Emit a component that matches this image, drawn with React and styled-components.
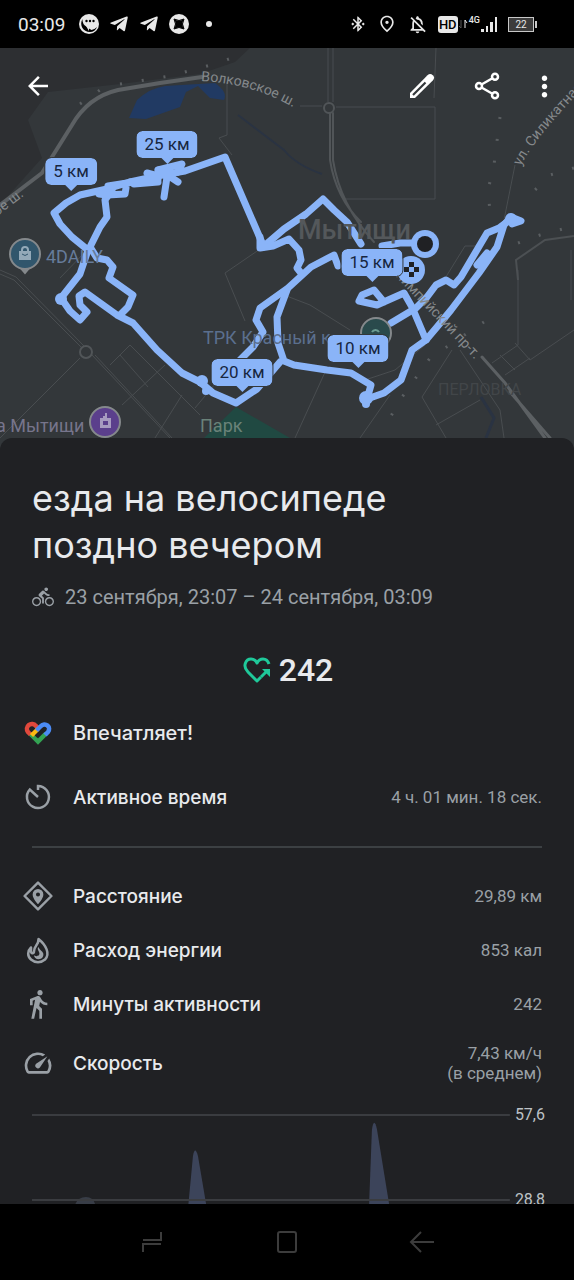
import React from 'react';
import styled, { createGlobalStyle } from 'styled-components';
import {
  MdArrowBack,
  MdBluetoothConnected,
  MdDirectionsBike,
  MdDirectionsWalk,
  MdMoreVert,
  MdOutlineNotificationsOff,
  MdOutlinePlace,
  MdSpeed,
} from 'react-icons/md';
import { FaTelegramPlane } from 'react-icons/fa';

const MAP = { top: 48, width: 574, height: 402 };

const kmMarks = [
  { label: '5 км', x: 71, y: 191 },
  { label: '25 км', x: 167, y: 164 },
  { label: '15 км', x: 372, y: 282 },
  { label: '20 км', x: 242, y: 392 },
  { label: '10 км', x: 358, y: 368 },
];

const route = [
  'M263 245 L225 157 L185 171 L167 174 L130 182 L107 189 L80 195 L66 203 L54 213 L60 224 L72 237 L88 250 L80 274 L61 298 L70 311 L80 320 L87 312 L80 305 L79 296 L85 292 L117 315 L133 323 L157 350 L182 373 L200 382 L213 393 L236 403 L257 389 L280 362',
  'M112 190 L105 200 L107 217 L100 227 L95 237 L90 247 L97 258 L107 260 L113 267 L109 278 L133 295 L128 307 L121 314',
  'M99 194 L107 195 L125 194 L126 188 M108 186 L140 181 M130 182 L158 180 L158 176 L147 173 M158 170 L182 164 L178 172 M158 170 L167 177 L164 197 M166 174 L178 182 M134 184 L158 182',
  'M263 247 L284 229 L306 214 L323 199 L334 210 L347 222 L354 233 L361 244 M382 246 L400 243 L412 243',
  'M260 237 L260 248 L273 246 L289 239 L299 250 L301 260 L297 268 L301 273',
  'M338 266 L334 255 L311 267 L288 288 L260 308 L256 320 L263 332 L253 347 L240 360',
  'M287 290 L277 317 L278 343 L284 361 L294 365 L327 370 L351 373 L371 385 L367 399 L384 393 L401 380 L412 350 L426 340 L437 327 L451 310 L479 273 L497 247 L504 225 L511 217 L521 221 L512 224',
  'M511 219 L499 228 L487 233 L461 277 L454 285 L446 280 L436 285 L427 297 L416 308 L391 323',
  'M477 265 L487 253',
  'M384 302 L374 290 L362 295 L359 301 L377 305 L404 293 L412 307 L426 340',
];

const stats = [
  { name: 'Расстояние', value: '29,89 км', icon: DistanceIcon },
  { name: 'Расход энергии', value: '853 кал', icon: FlameIcon },
  { name: 'Минуты активности', value: '242', icon: MdDirectionsWalk },
];

function ChatIcon() {
  return (
    <svg width="20" height="20" viewBox="0 0 20 20">
      <circle cx="10" cy="10" r="10" fill="#e8e8e8" />
      <path d="M3.500 5C0 11 4 18 11 18q5 0 7-5q-3 3-5.500 3Q6 12 4.500 10Q3 7 3.500 5z" fill="#000" />
      <path d="M7 12l3 1v4z" fill="#e8e8e8" />
      <g fill="#000">
        <circle cx="7.500" cy="7" r="1.200" />
        <circle cx="11" cy="7" r="1.200" />
        <circle cx="14.500" cy="7" r="1.200" />
      </g>
    </svg>
  );
}

function StarIcon() {
  return (
    <svg width="20" height="20" viewBox="0 0 20 20">
      <circle cx="10" cy="10" r="10" fill="#e8e8e8" />
      <path d="M5 5q5 3 10 0q-3 5 0 10q-5-3-10 0q3-5 0-10z" fill="#000" stroke="#000" strokeLinejoin="round" />
    </svg>
  );
}

function SignalIcon() {
  return (
    <svg width="17" height="16" viewBox="0 0 17 16" fill="#e8e8e8">
      <rect x="0" y="13" width="3" height="3" />
      <rect x="5" y="10" width="2" height="6" />
      <rect x="9" y="6" width="3" height="10" />
      <rect x="14" y="1" width="2" height="15" />
    </svg>
  );
}

function TrafficIcon() {
  return (
    <svg width="9" height="10" viewBox="0 0 9 10" fill="none">
      <path d="M2 1v8M0 7l2 2" stroke="#555" />
      <path d="M6 9V1l2 3" stroke="#e8e8e8" />
    </svg>
  );
}

function PencilIcon() {
  return (
    <svg width="26" height="26" viewBox="0 0 26 26">
      <path d="M1 25V20L18.500 2.200a3.500 3.500 0 0 1 5.300 5.300L6 25z" fill="#fff" />
      <path d="M4 22L16.500 9.500" stroke="#33373a" strokeWidth="2.200" />
    </svg>
  );
}

function ShareIcon() {
  return (
    <svg width="26" height="28" viewBox="0 0 26 28" fill="none" stroke="#fff" strokeWidth="2.500">
      <path d="M7.500 12.500L18 6.500M7.500 15.500L18 21.500" />
      <circle cx="5" cy="14" r="3" />
      <circle cx="21" cy="4.700" r="3" />
      <circle cx="21" cy="23.300" r="3" />
    </svg>
  );
}

function HeartPointsIcon() {
  return (
    <svg width="28" height="26" viewBox="0 0 28 26" fill="none" stroke="#1fc99a" strokeWidth="3">
      <path d="M18 20l-4 4L5 15C-1 9 3 2 8 2c3 0 5 2 6 4c1-2 3-4 6-4c3 0 5 2 6 5" strokeLinejoin="round" />
      <path d="M18 20l6-6" />
      <path d="M19 12h8v8z" fill="#1fc99a" stroke="none" />
    </svg>
  );
}

function FitIcon() {
  return (
    <svg width="28" height="24" viewBox="0 0 28 24" fill="none" strokeWidth="4.500">
      <path d="M6 12.500L14 20.500L22 12.500" stroke="#33a353" />
      <path d="M14 7L11.800 4.800A4.700 4.700 0 0 0 4 11L6.500 13.500" stroke="#e0483c" />
      <path d="M7.500 14.500L14 8" stroke="#f9bb12" />
      <path d="M12.500 9.500L17 5A4.600 4.600 0 0 1 24 11L21 14" stroke="#4b8bf5" />
      <path d="M12 15.500L19 8.500" stroke="#202124" strokeWidth="3" />
    </svg>
  );
}

function TimeIcon() {
  return (
    <svg width="28" height="28" viewBox="0 0 28 28" fill="none" stroke="#9aa0a6" strokeWidth="2.500">
      <path d="M14 7V3a11 11 0 1 1-8.200 3.600L14 14" />
    </svg>
  );
}

function DistanceIcon() {
  return (
    <svg width="30" height="30" viewBox="0 0 28 28">
      <path d="M14 1.500L26.500 14L14 26.500L1.500 14z" fill="none" stroke="#9aa0a6" strokeWidth="2.300" strokeLinejoin="round" />
      <path d="M14 7.500a5 5 0 0 0-5 5c0 4 5 9 5 9s5-5 5-9a5 5 0 0 0-5-5zm0 3.200a1.900 1.900 0 1 1 0 3.800a1.900 1.900 0 0 1 0-3.800z" fill="#9aa0a6" />
    </svg>
  );
}

function FlameIcon() {
  return (
    <svg width="28" height="28" viewBox="0 0 28 28" fill="none" stroke="#9aa0a6" strokeWidth="2.500">
      <path d="M14.500 3C15 9 9.500 10.500 10 15.500C10 18 7 18 7 15V11.500C3.500 15 3 20 7 23.500C11 27 17 27 21 23.500C26.500 18 22 9 14.500 3z" strokeLinejoin="round" />
      <path d="M14.500 11c-2.500 3 2.500 5 .5 8c-1.500 2-4.500 1-5 0c0 2.500 2 4.200 4.500 4.200c3.500 0 5.500-2.800 4.700-6c-.7-2.200-3.700-3.200-4.700-6.200z" fill="#9aa0a6" stroke="none" />
    </svg>
  );
}

function CityMap() {
  return (
    <MapSvg viewBox={`0 ${MAP.top} ${MAP.width} ${MAP.height}`} aria-hidden="true">
      <rect y="48" width="574" height="402" fill="#33373a" />
      <path d="M0 48H250L235 62L200 74L120 84L48 92L28 120L42 158L0 205z" fill="#2d2f32" />
      <path d="M129 118L137 100Q150 88 165 86L215 83Q228 92 224 100L210 98L198 86L186 92L180 107L146 119z" fill="#213a63" />
      <path d="M238 115L284 150Q296 165 322 174" fill="none" stroke="#2a3342" strokeWidth="2" />
      <path d="M481 397L494 418L486 438" fill="none" stroke="#2a3342" strokeWidth="3" />
      <path d="M236 407L290 438H204z" fill="#204942" />

      <g fill="none" stroke="#494d50" strokeWidth="1">
        <path d="M328 48V102M333 48V102M336 107H435V199H343M300 106H322M227 82V135L219 138L232 155M87 250L60 278M436 48L434 98M263 247L225 273L245 321" />
        <path d="M0 274L14 280L82 348M0 270L16 277L84 346M92 355L170 438M95 355L172 438M80 358L0 438M110 365L130 345L200 415M120 355L148 387M122 405L165 365M155 438L182 395M195 408L220 378" />
        <path d="M284 295L310 305L350 330M326 370L295 438M365 380L395 370L425 345M515 165L504 220M444 280L465 246H480M518 270V345L492 363M515 343L530 360L574 330M530 358L505 375M500 355L515 370M452 350L422 397L446 438M436 425L480 400M460 350L500 410L504 438M390 395L360 438M571 250V300" />
      </g>
      <path d="M574 236L545 240L516 260L518 280" fill="none" stroke="#4c5053" strokeWidth="2" />
      <g fill="none" stroke="#5c6063" strokeLinecap="round">
        <path d="M0 205L42 173L72 125Q88 97 118 90L160 83L202 77" strokeWidth="4" />
        <path d="M330 113V160Q336 198 361 222M333 113V160Q340 205 374 242" strokeWidth="2" stroke="#515558" />
        <path d="M482 357L505 383L545 438M510 392L550 438" strokeWidth="3" />
      </g>
      <g fill="#33373a" stroke="#515558" strokeWidth="2">
        <circle cx="329" cy="108" r="5" />
        <circle cx="86" cy="352" r="6" />
      </g>
      <path
        d="M80 104L100 90M120 84L170 76L218 63L240 55M500 117L494 165L488 190L490 212M574 168L550 175L530 195M518 243L540 235L574 226M484 322L430 358L400 400L386 425"
        fill="none"
        stroke="#5a5e61"
        strokeWidth="3"
        strokeDasharray="2 20"
      />

      <path id="volk" d="M201 81Q256 84 298 110" fill="none" />
      <path id="silikat" d="M521 166Q534 138 592 79" fill="none" />
      <path id="olymp" d="M395 276L480 365" fill="none" />
      <path id="volk2" d="M-21 230L42 182" fill="none" />

      <g fill="none" stroke="#8ab4f8" strokeWidth="7" strokeLinecap="round" strokeLinejoin="round">
        {route.map((d) => (
          <path key={d} d={d} />
        ))}
      </g>
      <g fill="#8ab4f8">
        <circle cx="61" cy="299" r="6" />
        <circle cx="202" cy="381" r="6" />
        <circle cx="206" cy="391" r="4" />
        <circle cx="366" cy="398" r="7" />
        <circle cx="366" cy="404" r="4" />
        <circle cx="511" cy="219" r="6" />
      </g>

      <StreetText>
        <textPath href="#volk">Волковское ш.</textPath>
      </StreetText>
      <StreetText>
        <textPath href="#silikat">ул. Силикатная</textPath>
      </StreetText>
      <StreetText>
        <textPath href="#olymp">лимпийский пр-т.</textPath>
      </StreetText>
      <StreetText>
        <textPath href="#volk2">вское ш.</textPath>
      </StreetText>
      <CityText x="298" y="239">Мытищи</CityText>
      <DistrictText x="438" y="395">ПЕРЛОВКА</DistrictText>
      <PlaceText x="46" y="263" $color="#667c9b">4DAILY</PlaceText>
      <PlaceText x="203" y="344" $color="#5b6f8e">ТРК Красный к</PlaceText>
      <PlaceText x="-4" y="432" $color="#77758c">а Мытищи</PlaceText>
      <PlaceText x="200" y="432" $color="#6a8279">Парк</PlaceText>

      <g strokeWidth="2" stroke="#85898c">
        <path d="M20 267L25 273L30 267z" fill="#85898c" />
        <circle cx="25" cy="254" r="15" fill="#31566c" />
        <circle cx="105" cy="422" r="15" fill="#5b3f8c" />
        <circle cx="376" cy="333" r="15" fill="#2a4a4c" />
      </g>
      <path d="M22 252v-2q0-3 3-3t3 3v2" fill="none" stroke="#93a9b8" strokeWidth="2" />
      <path d="M19 251h12v9H19z" fill="#93a9b8" />
      <path d="M22 254q3 3 6 0" fill="none" stroke="#31566c" />
      <path d="M100 428v-10h3v-2h2v-3h2v5h4v10zM103 421v4h5v-4z" fill="#a79bc0" fillRule="evenodd" />
      <path d="M372 332a4 4 0 0 1 7 0" fill="none" stroke="#6c9c92" strokeWidth="2" />

      <circle cx="425" cy="244" r="14" fill="#8ab4f8" />
      <circle cx="425" cy="244" r="8" fill="#202124" />
      <circle cx="411" cy="270" r="14" fill="#8ab4f8" />
      <g fill="#202124">
        <rect x="409" y="262" width="5" height="5" />
        <rect x="404" y="267" width="5" height="5" />
        <rect x="414" y="267" width="5" height="5" />
        <rect x="409" y="272" width="5" height="5" />
      </g>
    </MapSvg>
  );
}

function App() {
  return (
    <Screen>
      <GlobalStyle />
      <StatusBar>
        <Clock>03:09</Clock>
        <ChatIcon />
        <FaTelegramPlane size={20} />
        <FaTelegramPlane size={20} />
        <StarIcon />
        <Dot />
        <StatusRight>
          <MdBluetoothConnected size={18} />
          <MdOutlinePlace size={20} />
          <MdOutlineNotificationsOff size={21} />
          <Network>
            <HdBadge>HD</HdBadge>
            <TrafficIcon />
            <NetworkType>4G</NetworkType>
            <SignalIcon />
          </Network>
          <Battery>22</Battery>
        </StatusRight>
      </StatusBar>

      <Content>
        <MapArea>
          <CityMap />
          {kmMarks.map((mark) => (
            <KmMark key={mark.label} $x={mark.x} $y={mark.y}>
              {mark.label}
            </KmMark>
          ))}
          <Toolbar>
            <IconButton aria-label="Назад">
              <MdArrowBack size={30} />
            </IconButton>
            <ToolbarActions>
              <IconButton aria-label="Изменить">
                <PencilIcon />
              </IconButton>
              <IconButton aria-label="Поделиться" $wide>
                <ShareIcon />
              </IconButton>
              <IconButton aria-label="Ещё">
                <MdMoreVert size={33} />
              </IconButton>
            </ToolbarActions>
          </Toolbar>
        </MapArea>

        <Sheet>
          <Title>езда на велосипеде поздно вечером</Title>
          <DateRow>
            <MdDirectionsBike size={22} />
            <span>23 сентября, 23:07 – 24 сентября, 03:09</span>
          </DateRow>
          <Score>
            <HeartPointsIcon />
            <span>242</span>
          </Score>
          <Rows>
            <Row>
              <RowIcon>
                <FitIcon />
              </RowIcon>
              <RowName $large>Впечатляет!</RowName>
            </Row>
            <Row $spaced>
              <RowIcon>
                <TimeIcon />
              </RowIcon>
              <RowName>Активное время</RowName>
              <RowValue>4 ч. 01 мин. 18 сек.</RowValue>
            </Row>
            <Divider />
            {stats.map(({ name, value, icon: Icon }) => (
              <Row key={name}>
                <RowIcon>
                  <Icon size={32} />
                </RowIcon>
                <RowName>{name}</RowName>
                <RowValue>{value}</RowValue>
              </Row>
            ))}
            <Row $tall>
              <RowIcon>
                <MdSpeed size={32} />
              </RowIcon>
              <RowName>Скорость</RowName>
              <RowValue>
                7,43 км/ч
                <br />
                (в среднем)
              </RowValue>
            </Row>
          </Rows>
          <Chart>
            <Plot viewBox="0 0 478 104" preserveAspectRatio="none" aria-hidden="true">
              <g fill="#3c445a">
                <path d="M156 104L161 51Q163 40 166 51L175 104z" />
                <path d="M337 104L340 25Q342 11 345 24L358 104z" />
              </g>
              <path d="M42 104Q44 92 54 92Q63 92 64 104z" fill="#383d47" />
              <path d="M0 10H478M0 95H478" stroke="#3a3c40" strokeWidth="2" />
            </Plot>
            <Axis>
              <span>57,6</span>
              <span>28,8</span>
            </Axis>
          </Chart>
        </Sheet>
      </Content>

      <NavBar>
        <NavButton aria-label="Недавние">
          <svg width="22" height="24" viewBox="0 0 22 24">
            <path d="M2 10H20V2M2 22V14H20" />
          </svg>
        </NavButton>
        <NavButton aria-label="Домой">
          <svg width="22" height="24" viewBox="0 0 22 24">
            <rect x="2" y="2" width="18" height="20" rx="2" />
          </svg>
        </NavButton>
        <NavButton aria-label="Назад">
          <svg width="26" height="24" viewBox="0 0 26 24">
            <path d="M12 2L2 12L12 22M2 12H25" />
          </svg>
        </NavButton>
      </NavBar>
    </Screen>
  );
}

//Component Styling
const GlobalStyle = createGlobalStyle`
  * {
    box-sizing: border-box;
  }
  body {
    margin: 0;
    background: #000;
    font-family: Roboto, sans-serif;
  }
`;

const Screen = styled.div`
  display: flex;
  flex-direction: column;
  height: 100vh;
  overflow: hidden;
  color: #e8eaed;
`;

const StatusBar = styled.header`
  display: flex;
  flex: none;
  align-items: center;
  gap: 10px;
  height: 48px;
  padding: 0 40px 0 18px;
  background: #000;
  color: #e8e8e8;
`;

const Clock = styled.time`
  margin-right: 4px;
  font-size: 19px;
`;

const Dot = styled.span`
  width: 6px;
  height: 6px;
  margin-left: 7px;
  border-radius: 50%;
  background: #e8e8e8;
`;

const StatusRight = styled.div`
  display: flex;
  align-items: center;
  gap: 10px;
  margin-left: auto;
`;

const Network = styled.div`
  display: flex;
  align-items: center;
  gap: 1px;
`;

const HdBadge = styled.span`
  width: 20px;
  border-radius: 3px;
  background: #e8e8e8;
  color: #000;
  font-size: 13px;
  font-weight: 500;
  line-height: 17px;
  text-align: center;
`;

const NetworkType = styled.span`
  align-self: flex-start;
  font-size: 9px;
  font-weight: 500;
  line-height: 9px;
`;

const Battery = styled.span`
  position: relative;
  width: 26px;
  border: 1px solid #c8c8c8;
  background: #3c3c3c;
  font-size: 10px;
  line-height: 13px;
  text-align: center;

  &::after {
    content: '';
    position: absolute;
    top: 3px;
    right: -4px;
    width: 2px;
    height: 7px;
    background: #c8c8c8;
  }
`;

const Content = styled.main`
  flex: 1;
  min-height: 0;
  overflow: hidden;
  background: #202124;
`;

const MapArea = styled.section`
  position: relative;
`;

const MapSvg = styled.svg`
  display: block;
  width: 100%;
  height: auto;
`;

const StreetText = styled.text`
  fill: #85898c;
  font-size: 14px;
`;

const PlaceText = styled.text`
  fill: ${(props) => props.$color};
  font-size: 18px;
`;

const CityText = styled.text`
  fill: #54585b;
  font-size: 27px;
  font-weight: 500;
`;

const DistrictText = styled.text`
  fill: #424649;
  font-size: 16px;
`;

const KmMark = styled.span`
  position: absolute;
  left: ${(props) => (props.$x / MAP.width) * 100}%;
  top: ${(props) => ((props.$y - MAP.top) / MAP.height) * 100}%;
  padding: 0 8px;
  border-radius: 6px;
  outline: 1px solid #33373a;
  background: #8ab4f8;
  color: #17263f;
  font-size: 17px;
  line-height: 27px;
  white-space: nowrap;
  transform: translate(-50%, -33px);

  &::after {
    content: '';
    position: absolute;
    top: 27px;
    left: 50%;
    margin-left: -6px;
    border: 6px solid transparent;
    border-top-color: #8ab4f8;
  }
`;

const Toolbar = styled.div`
  position: absolute;
  top: 0;
  left: 0;
  right: 0;
  display: flex;
  align-items: center;
  justify-content: space-between;
  height: 76px;
  padding: 0 12px 0 20px;
`;

const ToolbarActions = styled.div`
  display: flex;
  gap: 21px;
`;

const IconButton = styled.button`
  display: flex;
  align-items: center;
  justify-content: ${(props) => (props.$wide ? 'flex-end' : 'center')};
  width: ${(props) => (props.$wide ? 44 : 36)}px;
  height: 36px;
  padding: ${(props) => (props.$wide ? '0 5px' : 0)};
  border: 0;
  background: none;
  color: #fff;
`;

const Sheet = styled.section`
  position: relative;
  margin-top: -12px;
  padding: 37px 32px 0;
  border-radius: 12px 12px 0 0;
  background: #202124;
`;

const Title = styled.h1`
  max-width: 440px;
  margin: 0;
  font-family: Inter, sans-serif;
  font-size: 36px;
  font-weight: 400;
  line-height: 47px;
`;

const DateRow = styled.p`
  display: flex;
  align-items: center;
  gap: 11px;
  margin: 16px 0 0;
  color: #9aa0a6;
  font-size: 20px;
  line-height: 24px;
`;

const Score = styled.div`
  display: flex;
  align-items: center;
  justify-content: center;
  gap: 8px;
  margin: 41px 0 0 2px;
  font-size: 32px;
  font-weight: 500;
  line-height: 40px;
`;

const Rows = styled.div`
  margin-top: 16px;
`;

const Row = styled.div`
  display: flex;
  align-items: center;
  min-height: ${(props) => (props.$tall ? 64 : 54)}px;
  margin-top: ${(props) => (props.$spaced ? 10 : 0)}px;
`;

const RowIcon = styled.span`
  display: flex;
  justify-content: center;
  width: 32px;
  margin: 0 19px 0 -10px;
  color: #9aa0a6;
`;

const RowName = styled.span`
  flex: 1;
  font-family: Inter, sans-serif;
  font-size: ${(props) => (props.$large ? 20 : 19)}px;
  font-weight: 500;
`;

const RowValue = styled.span`
  color: #9aa0a6;
  font-size: 17px;
  line-height: 20px;
  text-align: right;
`;

const Divider = styled.hr`
  height: 2px;
  margin: 22px 0 21px;
  border: 0;
  background: #3c4043;
`;

const Chart = styled.div`
  display: flex;
  gap: 5px;
  margin: 10px -3px 0 0;
`;

const Plot = styled.svg`
  flex: 1;
  min-width: 0;
  height: 104px;
`;

const Axis = styled.div`
  display: grid;
  grid-auto-rows: 20px;
  row-gap: 65px;
  color: #bdc1c6;
  font-size: 16px;
  line-height: 20px;
`;

const NavBar = styled.nav`
  display: flex;
  flex: none;
  align-items: center;
  justify-content: center;
  gap: 100px;
  height: 76px;
  background: #000;
`;

const NavButton = styled.button`
  display: flex;
  justify-content: center;
  width: 35px;
  padding: 0;
  border: 0;
  background: none;

  path,
  rect {
    fill: none;
    stroke: #3c3c3c;
    stroke-width: 2;
  }
`;

export default App;
